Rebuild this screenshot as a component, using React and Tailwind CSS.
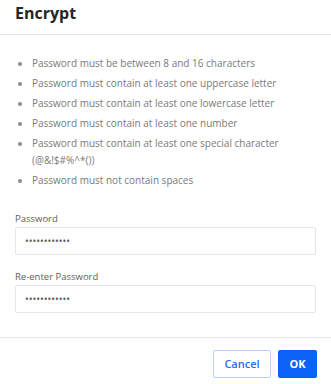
export default function App() {
  const rules = [
    'Password must be between 8 and 16 characters',
    'Password must contain at least one uppercase letter',
    'Password must contain at least one lowercase letter',
    'Password must contain at least one number',
    'Password must contain at least one special character (@&!$#%^*())',
    'Password must not contain spaces',
  ];

  return (
    <div className="w-[331px] h-[384px] bg-white flex flex-col" style={{ fontFamily: '"Open Sans", "Noto Sans", sans-serif' }}>
      {/* Header */}
      <div className="h-[35px] px-[15px] pt-[3px] border-b border-[#e6e6e6]">
        <h1 className="text-[16px] font-bold text-[#262626] leading-[20px]">Encrypt</h1>
      </div>

      {/* Body */}
      <div className="flex-1 px-[15px] pt-[20px]">
        <ul className="pl-[17px] pr-[30px] list-disc marker:text-[#8c8c8c] text-[10px] leading-[17px] text-[#7a7a7a] space-y-[3px]">
          {rules.map((r) => (
            <li key={r}>{r}</li>
          ))}
        </ul>

        <div className="mt-[23px]">
          <label className="block text-[9.5px] text-[#5e5e5e] leading-[14px] mb-[1px]">Password</label>
          <input
            type="password"
            defaultValue="123456789012"
            className="w-full h-[28px] border border-[#e6e6e6] rounded-[2px] px-[9px] text-[10px] text-[#595959] outline-none"
          />
        </div>

        <div className="mt-[15px]">
          <label className="block text-[9.5px] text-[#5e5e5e] leading-[14px] mb-[1px]">Re-enter Password</label>
          <input
            type="password"
            defaultValue="123456789012"
            className="w-full h-[28px] border border-[#e6e6e6] rounded-[2px] px-[9px] text-[10px] text-[#595959] outline-none"
          />
        </div>
      </div>

      {/* Footer */}
      <div className="h-[47px] border-t border-[#e6e6e6] px-[14px] pt-[12px] flex items-start justify-end gap-[7px]">
        <button className="h-[28px] w-[58px] border border-[#b8cffb] rounded-[2px] text-[#2a6ef0] text-[11px] font-semibold bg-white">
          Cancel
        </button>
        <button className="h-[28px] w-[39px] rounded-[2px] bg-[#0b62f5] text-white text-[11px] font-bold">
          OK
        </button>
      </div>
    </div>
  );
}
